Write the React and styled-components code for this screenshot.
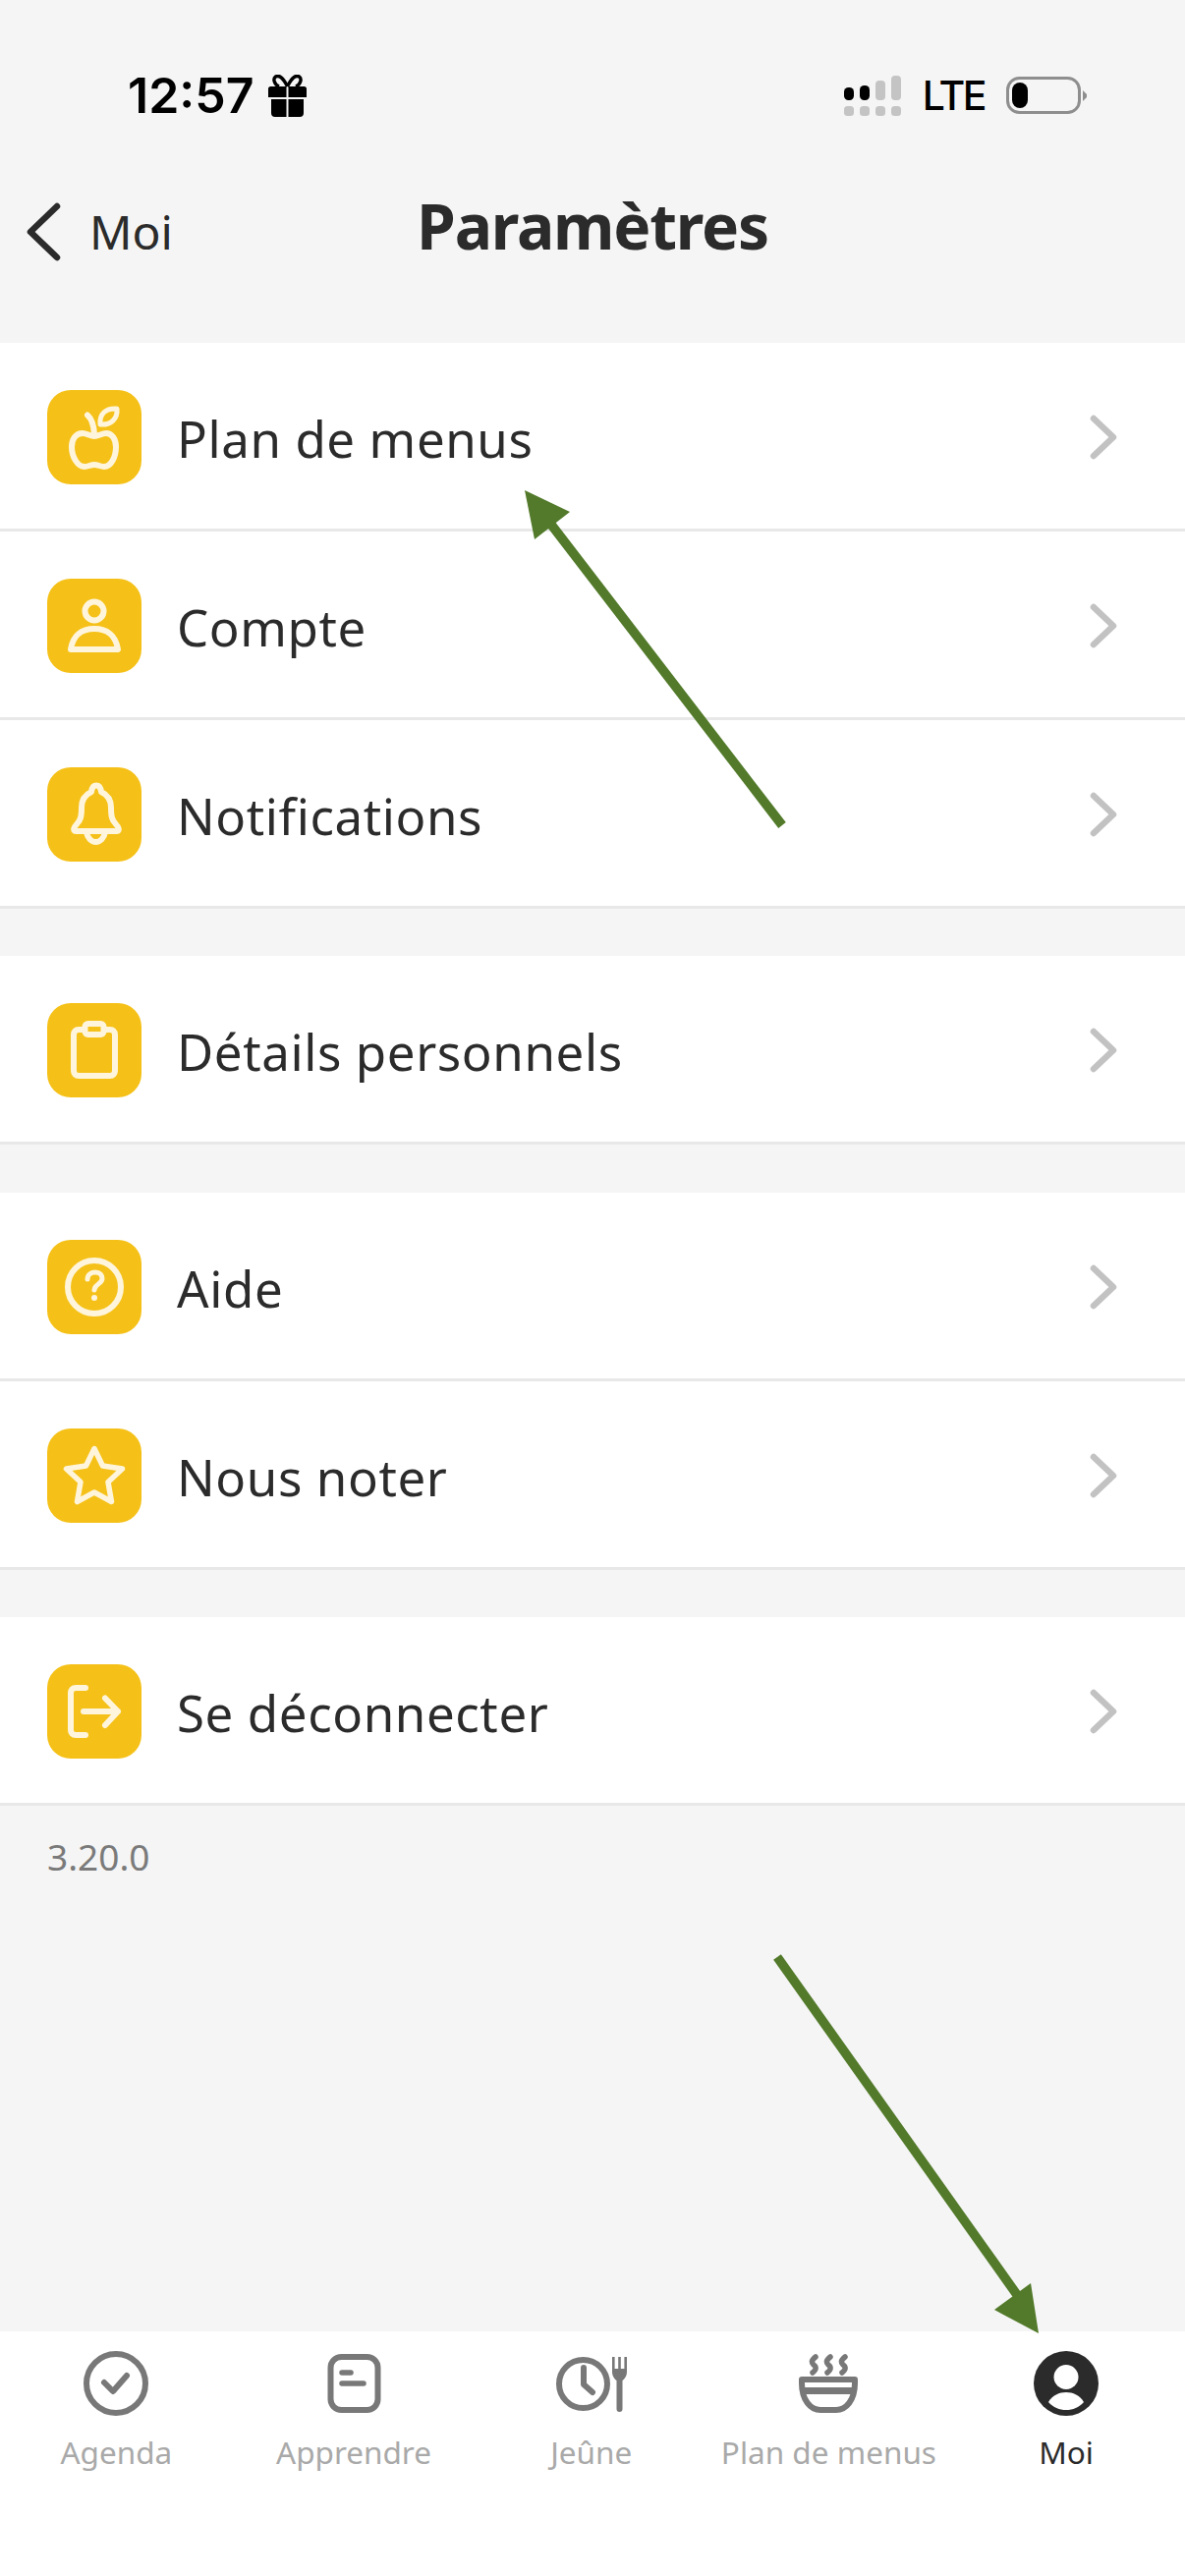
import React from 'react';
import styled, { createGlobalStyle } from 'styled-components';

const Global = createGlobalStyle`
  html, body { margin: 0; padding: 0; background: #f5f5f5; }
  * { box-sizing: border-box; }
`;

const FONT = `"Noto Sans", "Open Sans", sans-serif`;
const INK = '#2b2b2b';
const CREAM = '#fff5dc';

const Frame = styled.div`
  position: relative;
  width: 1206px;
  height: 2622px;
  overflow: hidden;
  display: flex;
  flex-direction: column;
  background: #f5f5f5;
  font-family: ${FONT};
  color: ${INK};
`;

const StatusBar = styled.div`
  height: 194px;
  display: flex;
  align-items: center;
  justify-content: space-between;
  padding: 0 100px 0 130px;
`;
const Clock = styled.div`
  display: flex;
  align-items: center;
  gap: 14px;
`;
const Time = styled.span`
  font-family: Inter, sans-serif;
  font-size: 50px;
  font-weight: 600;
  line-height: 1;
  color: #000;
`;
const StatusRight = styled.div`
  display: flex;
  align-items: center;
  gap: 22px;
`;
const Lte = styled.span`
  font-family: Inter, sans-serif;
  font-size: 41px;
  font-weight: 500;
  letter-spacing: -2.5px;
  line-height: 1;
  color: #000;
`;

const NavBar = styled.div`
  height: 72px;
  margin-bottom: 82.5px;
  display: grid;
  grid-template-columns: 1fr auto 1fr;
  align-items: center;
`;
const Back = styled.div`
  display: flex;
  align-items: center;
  gap: 26px;
  padding-left: 25px;
  font-size: 48px;
  line-height: 72px;
  margin-top: 6px;
`;
const Title = styled.h1`
  margin: -6px 0 0;
  font-size: 64px;
  font-weight: 700;
  letter-spacing: -1.2px;
  line-height: 72px;
  color: ${INK};
`;

const Sections = styled.div`
  display: flex;
  flex-direction: column;
  gap: 48.5px;
`;
const Section = styled.section`
  background: #fff;
`;
const Row = styled.div`
  height: 192px;
  padding: 48px 68px 0 48px;
  display: flex;
  align-items: flex-start;
  border-bottom: 3px solid #e8e8e8;
`;
const Tile = styled.div`
  flex: none;
  width: 96px;
  height: 96px;
  border-radius: 24px;
  background: #f5c118;
  svg { display: block; }
`;
const RowLabel = styled.span`
  flex: 1;
  margin-left: 36px;
  font-size: 51px;
  letter-spacing: 0.6px;
  line-height: 98px;
  color: ${INK};
`;
const Chevron = styled.svg`
  flex: none;
  display: block;
  margin-top: 24px;
`;

const Version = styled.div`
  padding: 28px 0 0 48px;
  font-size: 37px;
  line-height: 48px;
  color: #7a7a7a;
`;

const TabBar = styled.nav`
  margin-top: auto;
  margin-left: -2.5px;
  height: 249px;
  background: #fff;
  display: grid;
  grid-template-columns: repeat(5, 241.7px);
  align-content: start;
  padding-top: 20px;
`;
const Tab = styled.div`
  display: flex;
  flex-direction: column;
  align-items: center;
  color: ${p => (p.$active ? INK : '#a9a9a9')};
  svg { display: block; flex: none; }
`;
const TabLabel = styled.span`
  margin-top: 15px;
  font-size: 31.5px;
  line-height: 44px;
  white-space: nowrap;
`;

const Arrows = styled.svg`
  position: absolute;
  left: 0;
  top: 0;
  pointer-events: none;
`;

const Glyph = ({ children }) => (
  <svg width="96" height="96" viewBox="0 0 96 96" fill="none" stroke={CREAM} strokeWidth="6" strokeLinecap="round" strokeLinejoin="round">
    {children}
  </svg>
);

const AppleIcon = () => (
  <Glyph>
    <path d="M48 47C44 47 40 44 36 44C29 44 25 50 25 58C25 68 31 78 38 78C42 78 44 76 48 76C52 76 54 78 58 78C65 78 70 68 70 58C70 50 66 44 60 44C56 44 52 47 48 47Z" />
    <path d="M41 25.5C45 29 47.5 36 48 45" />
    <path d="M54 35C53 24 60 18 71 19C72 29 65 36 54 35Z" strokeWidth="5" />
  </Glyph>
);
const PersonIcon = () => (
  <Glyph>
    <circle cx="48" cy="33" r="9.5" />
    <path d="M24 72C26 58 35 51 48 51C61 51 70 58 72 72Z" />
  </Glyph>
);
const BellIcon = () => (
  <Glyph>
    <path d="M50 18.5C47 18.5 45.5 21 45 25C38.5 28 35 33 35 41C35 50 34 54 30 58C27 61 26 65 29 65H71C74 65 73 61 70 58C66 54 65 50 65 41C65 33 61.5 28 55 25C54.5 21 53 18.5 50 18.5Z" />
    <path d="M40 66C41 72 45 76 49.5 76C54 76 58 72 59 66" />
  </Glyph>
);
const ClipboardIcon = () => (
  <Glyph>
    <path d="M38 27H32C29 27 27 29 27 32V69C27 72 29 74 32 74H64C67 74 69 72 69 69V32C69 29 67 27 64 27H58" />
    <rect x="38.5" y="21" width="19" height="11" rx="3" />
  </Glyph>
);
const HelpIcon = () => (
  <Glyph>
    <circle cx="48" cy="48" r="27" />
    <path d="M41 40C41 35 45 33 49 33C54 33 56 36 56 39.5C56 44 50 45 48.5 49L48 51" strokeWidth="5" />
    <circle cx="48" cy="59" r="3" fill={CREAM} stroke="none" />
  </Glyph>
);
const StarIcon = () => (
  <Glyph>
    <path d="M48 20.5L56.5 38L76.5 41L62 54.5L65.5 74.5L48 65L30.5 74.5L34 54.5L19.5 41L39.5 38Z" strokeWidth="5.5" />
  </Glyph>
);
const LogoutIcon = () => (
  <Glyph>
    <path d="M39 24H29C26 24 24 26 24 29V67C24 70 26 72 29 72H39" />
    <path d="M37 48H72M59 34.5L72 48L59 62" />
  </Glyph>
);

const GiftIcon = () => (
  <svg width="39" height="43" viewBox="0 0 39 43" fill="#000">
    <path d="M19.5 12C15 3 11 0 7.5 2C4.5 4 6 10 11 12" fill="none" stroke="#000" strokeWidth="3.4" />
    <path d="M19.5 12C24 3 28 0 31.5 2C34.5 4 33 10 28 12" fill="none" stroke="#000" strokeWidth="3.4" />
    <path d="M2.5 12H18.5V23H0V14.500A2.500 2.500 0 0 1 2.500 12ZM20.500 12H36.500A2.500 2.500 0 0 1 39 14.500V23H20.500Z" />
    <path d="M3 25H18.500V43H7A4 4 0 0 1 3 39ZM20.500 25H36V39A4 4 0 0 1 32 43H20.500Z" />
  </svg>
);

const SignalIcon = () => (
  <svg width="58" height="41" viewBox="0 0 58 41">
    <rect x="0" y="12" width="10" height="13" rx="4.500" fill="#000" />
    <rect x="16" y="10" width="10" height="15" rx="4.500" fill="#000" />
    <rect x="32" y="5" width="10" height="20" rx="4" fill="#c4c4c4" />
    <rect x="48" y="0" width="10" height="25" rx="4" fill="#c4c4c4" />
    {[0, 16, 32, 48].map(x => (
      <rect key={x} x={x} y="31" width="10" height="10" rx="3.500" fill="#c4c4c4" />
    ))}
  </svg>
);
const BatteryIcon = () => (
  <svg width="82" height="38" viewBox="0 0 82 38">
    <rect x="1.500" y="1.500" width="73" height="35" rx="12" fill="none" stroke="#8e8e8e" strokeWidth="3" />
    <rect x="6" y="6" width="16" height="26" rx="8" fill="#000" />
    <path d="M78 14L82 18V21L78 25Z" fill="#8e8e8e" />
  </svg>
);

const ChevronRight = () => (
  <Chevron width="30" height="48" viewBox="0 0 30 48" fill="none" stroke="#c2c2c2" strokeWidth="6.500" strokeLinecap="round" strokeLinejoin="round">
    <path d="M5 5L25 24L5 43" />
  </Chevron>
);

const TabSvg = ({ width = 66, children }) => (
  <svg width={width} height="66" viewBox={`0 0 ${width} 66`} fill="none" stroke="#787878" strokeWidth="6" strokeLinecap="round" strokeLinejoin="round">
    {children}
  </svg>
);
const AgendaIcon = () => (
  <TabSvg>
    <circle cx="33" cy="33" r="30" />
    <path d="M21 32L30 41L44 25" />
  </TabSvg>
);
const LearnIcon = () => (
  <TabSvg>
    <rect x="9.500" y="6" width="48" height="54" rx="11" />
    <path d="M21 22H30M21 33H43" strokeWidth="5.500" />
  </TabSvg>
);
const FastIcon = () => (
  <TabSvg width={78}>
    <circle cx="30.500" cy="33.500" r="24.500" />
    <path d="M31 17V34L40 42" />
    <path d="M61.300 6V20M67.500 6V20M73.700 6V20" strokeWidth="2.600" strokeLinecap="butt" />
    <path d="M60 18H75V21C75 26 72 29 70.500 30V59A3 3 0 0 1 64.500 59V30C63 29 60 26 60 21Z" fill="#787878" stroke="none" />
  </TabSvg>
);
const BowlIcon = () => (
  <TabSvg>
    <path d="M6 29H60V33C60 50 51 60 41 60H25C15 60 6 50 6 33Z" />
    <path d="M8 40.500H58" strokeWidth="7" strokeLinecap="butt" />
    <path d="M20 6C15 10 16 12 18 14C21 16 21 19 17 22M35 6C30 10 31 12 33 14C36 16 36 19 32 22M50 6C45 10 46 12 48 14C51 16 51 19 47 22" strokeWidth="5.500" />
  </TabSvg>
);
const MeIcon = () => (
  <svg width="66" height="66" viewBox="0 0 66 66">
    <circle cx="33" cy="33" r="33" fill={INK} />
    <circle cx="33" cy="26.500" r="12.500" fill="#fff" />
    <path d="M15 52C19 45 26 42 33 42C40 42 47 45 51 52C46 57.500 40 60 33 60C26 60 20 57.500 15 52Z" fill="#fff" />
  </svg>
);

const GROUPS = [
  [['Plan de menus', AppleIcon], ['Compte', PersonIcon], ['Notifications', BellIcon]],
  [['Détails personnels', ClipboardIcon]],
  [['Aide', HelpIcon], ['Nous noter', StarIcon]],
  [['Se déconnecter', LogoutIcon]],
];

const TABS = [
  ['Agenda', AgendaIcon],
  ['Apprendre', LearnIcon],
  ['Jeûne', FastIcon],
  ['Plan de menus', BowlIcon],
  ['Moi', MeIcon, true],
];

export default function App() {
  return (
    <Frame>
      <Global />
      <StatusBar>
        <Clock>
          <Time>12:57</Time>
          <GiftIcon />
        </Clock>
        <StatusRight>
          <SignalIcon />
          <Lte>LTE</Lte>
          <BatteryIcon />
        </StatusRight>
      </StatusBar>
      <NavBar>
        <Back>
          <svg width="40" height="60" viewBox="0 0 40 60" fill="none" stroke={INK} strokeWidth="6.500" strokeLinecap="round" strokeLinejoin="round">
            <path d="M33 4L6 30L33 56" />
          </svg>
          <span>Moi</span>
        </Back>
        <Title>Paramètres</Title>
        <div />
      </NavBar>
      <Sections>
        {GROUPS.map((rows, i) => (
          <Section key={i}>
            {rows.map(([label, Icon]) => (
              <Row key={label}>
                <Tile><Icon /></Tile>
                <RowLabel>{label}</RowLabel>
                <ChevronRight />
              </Row>
            ))}
          </Section>
        ))}
      </Sections>
      <Version>3.20.0</Version>
      <TabBar>
        {TABS.map(([label, Icon, active]) => (
          <Tab key={label} $active={active}>
            <Icon />
            <TabLabel>{label}</TabLabel>
          </Tab>
        ))}
      </TabBar>
      <Arrows width="1206" height="2622" viewBox="0 0 1206 2622">
        <line x1="796" y1="840" x2="558" y2="530" stroke="#527a2a" strokeWidth="9.5" />
        <polygon points="534,499 580,521 544,549" fill="#527a2a" />
        <line x1="791" y1="1992" x2="1038" y2="2340" stroke="#527a2a" strokeWidth="9.5" />
        <polygon points="1057,2375 1049,2324 1012,2351" fill="#527a2a" />
      </Arrows>
    </Frame>
  );
}
